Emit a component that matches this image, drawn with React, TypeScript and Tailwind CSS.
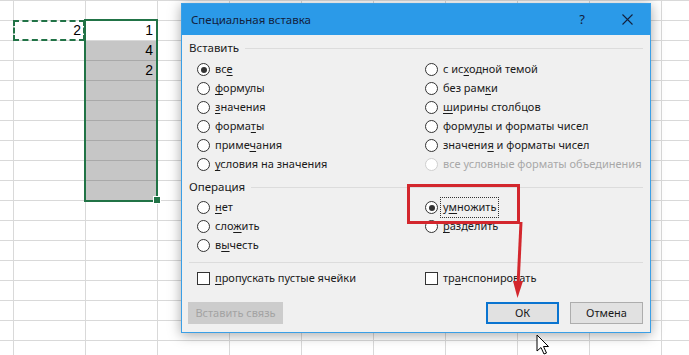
import React from "react";

const ROWS = 18;
const COLS = 10;

const cellValues: Record<string, string> = {
  "1-1": "2",
  "1-2": "1",
  "2-2": "4",
  "3-2": "2",
};

function Sheet() {
  return (
    <div className="border-t border-[#d9d9d9]">
      {Array.from({ length: ROWS }).map((_, r) => (
        <div key={r} className="flex h-[20px]">
          <div className="w-[14px] shrink-0 border-r border-b border-[#d9d9d9]" />
          {Array.from({ length: COLS }).map((_, c) => {
            const col = c + 1;
            const shaded = col === 2 && r >= 2 && r <= 9;
            const v = cellValues[`${r}-${col}`];
            return (
              <div
                key={c}
                className={`w-[72px] shrink-0 border-r border-b flex items-center justify-end pr-[4px] text-[14px] text-black ${
                  shaded ? "bg-[#c6c6c6] border-[#a9a9a9]" : "border-[#d9d9d9]"
                }`}
              >
                {v}
              </div>
            );
          })}
        </div>
      ))}
    </div>
  );
}

function Label({ text, u, disabled }: { text: string; u?: number; disabled?: boolean }) {
  if (u === undefined) return <span className={disabled ? "text-[#a8a8a8]" : ""}>{text}</span>;
  return (
    <span>
      {text.slice(0, u)}
      <span className="underline underline-offset-[2px]">{text[u]}</span>
      {text.slice(u + 1)}
    </span>
  );
}

function Radio({ text, u, checked, disabled, focus }: { text: string; u?: number; checked?: boolean; disabled?: boolean; focus?: boolean }) {
  return (
    <div className="flex items-center h-[19px] gap-[5px] whitespace-nowrap">
      <span
        className={`w-[13px] h-[13px] rounded-full border bg-white flex items-center justify-center shrink-0 ${
          disabled ? "border-[#cfcfcf]" : "border-[#333333]"
        }`}
      >
        {checked && <span className="w-[6px] h-[6px] rounded-full bg-[#333333]" />}
      </span>
      <span className={focus ? "outline-1 outline-dotted outline-[#333] outline-offset-[1px] px-[1px] -ml-[1px]" : ""}>
        <Label text={text} u={u} disabled={disabled} />
      </span>
    </div>
  );
}

function Check({ text, u }: { text: string; u: number }) {
  return (
    <div className="flex items-center h-[18px] gap-[5px] whitespace-nowrap">
      <span className="w-[13px] h-[13px] border border-[#333333] bg-white shrink-0" />
      <Label text={text} u={u} />
    </div>
  );
}

function GroupHeader({ title }: { title: string }) {
  return (
    <div className="flex items-center h-[18px] pl-[7px] pr-[7px] gap-[6px]">
      <span className="text-[11.5px]">{title}</span>
      <div className="flex-1 h-px bg-[#dcdcdc]" />
    </div>
  );
}

function Dialog() {
  return (
    <div className="absolute left-[181px] top-[3px] w-[470px] h-[330px] border border-[#3a9fe6] bg-[#f0f0f0] shadow-[0_2px_12px_rgba(0,0,0,0.35)] flex flex-col text-[11px] text-[#1a1a1a] font-['Noto_Sans',sans-serif]">
      {/* title bar */}
      <div className="h-[31px] bg-[#2b9ae8] flex items-center pl-[9px] pr-[17px] text-[#13213d] text-[11.5px]">
        <span className="flex-1">Специальная вставка</span>
        <span className="mr-[37px] text-[13px]">?</span>
        <svg width="11" height="11" viewBox="0 0 11 11">
          <path d="M0.5 0.5 L10.5 10.5 M10.5 0.5 L0.5 10.5" stroke="#13213d" strokeWidth="1.1" />
        </svg>
      </div>

      <div className="pt-[4px]">
        <GroupHeader title="Вставить" />
      </div>
      <div className="grid grid-cols-[228px_1fr] pl-[15px] mt-[3px]">
        <Radio text="все" u={2} checked />
        <Radio text="с исходной темой" u={4} />
        <Radio text="формулы" u={0} />
        <Radio text="без рамки" u={7} />
        <Radio text="значения" u={0} />
        <Radio text="ширины столбцов" u={0} />
        <Radio text="форматы" u={5} />
        <Radio text="формулы и форматы чисел" u={5} />
        <Radio text="примечания" u={5} />
        <Radio text="значения и форматы чисел" u={7} />
        <Radio text="условия на значения" u={0} />
        <Radio text="все условные форматы объединения" disabled />
      </div>

      <div className="mt-[4px]">
        <GroupHeader title="Операция" />
      </div>
      <div className="grid grid-cols-[228px_1fr] pl-[15px] mt-[2px]">
        <Radio text="нет" u={0} />
        <Radio text="умножить" u={1} checked focus />
        <Radio text="сложить" u={3} />
        <Radio text="разделить" u={0} />
        <Radio text="вычесть" u={1} />
      </div>

      <div className="mx-[7px] mt-[7px] h-px bg-[#dcdcdc]" />
      <div className="grid grid-cols-[228px_1fr] pl-[15px] mt-[6px]">
        <Check text="пропускать пустые ячейки" u={0} />
        <Check text="транспонировать" u={2} />
      </div>

      <div className="flex items-center mt-[15px] pl-[6px] pr-[7px]">
        <div className="w-[95px] h-[22px] bg-[#cccccc] text-[#a3a3a3] flex items-center justify-center">Вставить связь</div>
        <div className="flex-1" />
        <div className="w-[73px] h-[22px] bg-[#e1e1e1] border-2 border-[#0a74d0] flex items-center justify-center">ОК</div>
        <div className="w-[73px] h-[22px] ml-[11px] bg-[#e1e1e1] border border-[#adadad] flex items-center justify-center">Отмена</div>
      </div>
    </div>
  );
}

export default function App() {
  return (
    <div className="relative w-[689px] h-[355px] overflow-hidden bg-white font-['Liberation_Sans',sans-serif]">
      <Sheet />

      {/* copy marquee */}
      <div className="absolute left-[13px] top-[20px] w-[72px] h-[21px] border-2 border-dashed border-[#217346]" />
      {/* selection */}
      <div className="absolute left-[84px] top-[19px] w-[74px] h-[183px] border-2 border-[#217346]" />
      <div className="absolute left-[154px] top-[197px] w-[6px] h-[6px] bg-[#217346] outline outline-1 outline-white" />

      <Dialog />

      {/* annotation */}
      <div className="absolute left-[407px] top-[184px] w-[113px] h-[40px] border-[3px] border-[#d3272d]" />
      <svg className="absolute left-0 top-0" width="689" height="355">
        <path d="M521 222 L518 286" stroke="#d3272d" strokeWidth="3" fill="none" />
        <path d="M513 281 L523 281 L517.5 298 Z" fill="#d3272d" />
      </svg>

      {/* mouse cursor */}
      <svg className="absolute left-[536px] top-[334px]" width="14" height="21" viewBox="0 0 14 21">
        <path d="M1 1 L1 17 L5 13.5 L8 20 L10.5 19 L7.5 12.5 L12.5 12.5 Z" fill="white" stroke="black" strokeWidth="1" strokeLinejoin="round" />
      </svg>
    </div>
  );
}
